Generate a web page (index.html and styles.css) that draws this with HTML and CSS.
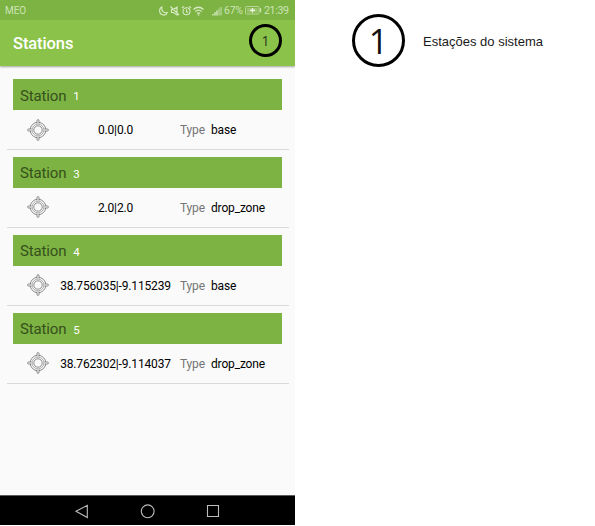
FILE: index.html
```html
<!DOCTYPE html>
<html lang="pt">
<head>
<meta charset="utf-8">
<title>Stations</title>
<link rel="stylesheet" href="styles.css">
</head>
<body>
<svg class="defs" aria-hidden="true">
  <symbol id="target" viewBox="0 0 22 22">
    <g fill="none" stroke="#707070" stroke-width=".8">
      <circle cx="11" cy="11" r="7.8"/>
      <circle cx="11" cy="11" r="5.900" stroke="#999"/>
      <circle cx="11" cy="11" r="4.200"/>
      <g fill="#fafafa">
        <path d="M10 4.600V1.600a1 1 0 0 1 2 0v3"/>
        <path d="M10 17.400v3a1 1 0 0 0 2 0v-3M4.600 10h-3a1 1 0 0 0 0 2h3M17.400 10h3a1 1 0 0 1 0 2h-3"/>
      </g>
    </g>
  </symbol>
</svg>
<div class="page">
  <main class="phone">
    <div class="status">
      <span class="carrier">MEO</span>
      <svg class="indicators" viewBox="0 0 66 12" fill="none" stroke="#d9eac6" stroke-width="1.100">
        <path d="M3.800 2C.8 3.300.8 8.600 4.300 9.800 6.500 10.500 8.600 9.400 9.300 7.500 5.900 8.600 3 5.800 3.800 2Z"/>
        <path d="M13.500 4.500h2l3.500-2.500v8l-3.500-2.500h-2zM12.500 1.500l8.500 8.500"/>
        <circle cx="28.500" cy="6.300" r="3.500"/>
        <path d="M28.500 4.300v2.300l1.500.8M24 3l2-1.700M33 3l-2-1.700"/>
        <path d="M35.500 4.500q5-4.500 10 0M37.200 6.600q3.300-3 6.600 0M39 8.500q1.500-1.300 3 0" stroke-width="1.200"/>
        <circle cx="40.500" cy="10" r=".8" fill="#d9eac6" stroke="none"/>
        <path d="M55 10.500V9M57 10.500V7.200M59 10.500V5.500" stroke-width="1.400"/>
        <path d="M61 10.500V3.500M63 10.500V2" stroke-width="1.400" opacity=".6"/>
      </svg>
      <span class="percent">67%</span>
      <svg class="battery" viewBox="0 0 17 9">
        <rect x=".5" y=".5" width="13.500" height="7.500" rx=".8" fill="none" stroke="#b9d598"/>
        <rect x="2" y="2" width="10.500" height="4.500" fill="#9cc56d"/>
        <path d="M5 4.300h5M7.500 2v4.600" stroke="#eef6e5" stroke-width="1.300"/>
        <path d="M15.500 2.200v4" stroke="#d6e8c2" stroke-width="1.300"/>
      </svg>
      <span class="time">21:39</span>
    </div>
    <header class="appbar">
      <h1>Stations</h1>
      <span class="marker small">1</span>
    </header>
    <div class="list">
      <section class="station">
        <h2>Station <b>1</b></h2>
        <div class="row"><svg class="target"><use href="#target"/></svg><span class="coords">0.0|0.0</span><span class="type">Type</span><span class="value">base</span></div>
      </section>
      <section class="station">
        <h2>Station <b>3</b></h2>
        <div class="row"><svg class="target"><use href="#target"/></svg><span class="coords">2.0|2.0</span><span class="type">Type</span><span class="value">drop_zone</span></div>
      </section>
      <section class="station">
        <h2>Station <b>4</b></h2>
        <div class="row"><svg class="target"><use href="#target"/></svg><span class="coords">38.756035|-9.115239</span><span class="type">Type</span><span class="value">base</span></div>
      </section>
      <section class="station">
        <h2>Station <b>5</b></h2>
        <div class="row"><svg class="target"><use href="#target"/></svg><span class="coords">38.762302|-9.114037</span><span class="type">Type</span><span class="value">drop_zone</span></div>
      </section>
    </div>
    <nav class="navbar">
      <svg viewBox="0 0 16 16"><path d="M2 8.300 13.300 2.300v12.200z"/></svg>
      <svg viewBox="0 0 16 16"><circle cx="7.700" cy="8.300" r="6.400"/></svg>
      <svg viewBox="0 0 16 16"><path d="M2.500 2.500h11v11h-11z"/></svg>
    </nav>
  </main>
  <aside class="legend">
    <span class="marker large">1</span>
    <span class="caption">Estações do sistema</span>
  </aside>
</div>
</body>
</html>
```

FILE: styles.css
```css
* { box-sizing: border-box; }
body { margin: 0; background: #fff; font-family: Roboto, sans-serif; }
.defs { display: none; }
.page { display: flex; width: 595px; height: 526px; overflow: hidden; }
.phone { display: flex; flex-direction: column; width: 295px; height: 525px; background: #fafafa; }
.status { display: flex; align-items: center; height: 20px; padding: 1px 0 0 5px; background: #7cb342; color: #cfe3b8; font-size: 10px; line-height: 19px; }
.carrier { width: 153px; font-size: 10px; letter-spacing: -.1px; }
.indicators { width: 66px; height: 12px; }
.percent { width: 21px; font-size: 10.4px; letter-spacing: -.2px; }
.battery { width: 17px; height: 9px; }
.time { margin-left: 2px; font-size: 10.6px; letter-spacing: -.35px; }
.appbar { display: flex; align-items: center; justify-content: space-between; height: 46px; padding: 0 13px; background: #8bc34a; color: #fff; box-shadow: 0 1px 2px rgba(0, 0, 0, .35); clip-path: inset(0 0 -5px 0); }
.appbar h1 { margin: 0; padding-top: 1px; font-size: 16.5px; font-weight: 500; line-height: 45px; letter-spacing: -.1px; }
.marker { display: flex; align-items: center; justify-content: center; border: 3px solid #000; border-radius: 50%; font-family: "Open Sans", sans-serif; line-height: 1; }
.small { width: 33px; height: 33px; margin-top: -5px; color: #26331b; font-size: 14px; }
.large { width: 53px; height: 53px; color: #111; font-size: 34px; }
.list { flex: 1; padding: 13px 6px 0 7px; }
.station { height: 77.9px; }
.station h2 { display: flex; align-items: center; height: 31px; margin: 0 7px 0 6px; padding: 2px 0 0 7px; background: #7cb342; color: #36501c; font-size: 15px; font-weight: 400; letter-spacing: -.15px; }
.station b { margin-left: 7px; padding-top: 1px; color: #fff; font-size: 11.5px; font-weight: 400; letter-spacing: 0; }
.row { display: flex; align-items: center; height: 40px; padding-left: 20px; border-bottom: 1px solid #dadada; font-size: 12px; letter-spacing: -.16px; color: #000; }
.row span { padding-top: 1px; }
.target { width: 22px; height: 22px; }
.coords { width: 119px; margin-left: 7px; text-align: center; white-space: nowrap; }
.type { width: 26px; margin-left: 5px; color: #757575; }
.value { margin-left: 5px; }
.navbar { display: flex; justify-content: space-between; align-items: center; height: 30px; padding: 0 74px; border-top: 1px solid #5a5a5a; background: #000; }
.navbar svg { width: 16px; height: 16px; fill: none; stroke: #bdbdbd; stroke-width: 1.1; }
.legend { display: flex; align-items: center; height: 53px; margin: 14px 0 0 57px; }
.caption { margin-left: 18px; padding-top: 1px; color: #1a1a1a; font-family: "Liberation Sans", Arial, sans-serif; font-size: 13px; }
```
